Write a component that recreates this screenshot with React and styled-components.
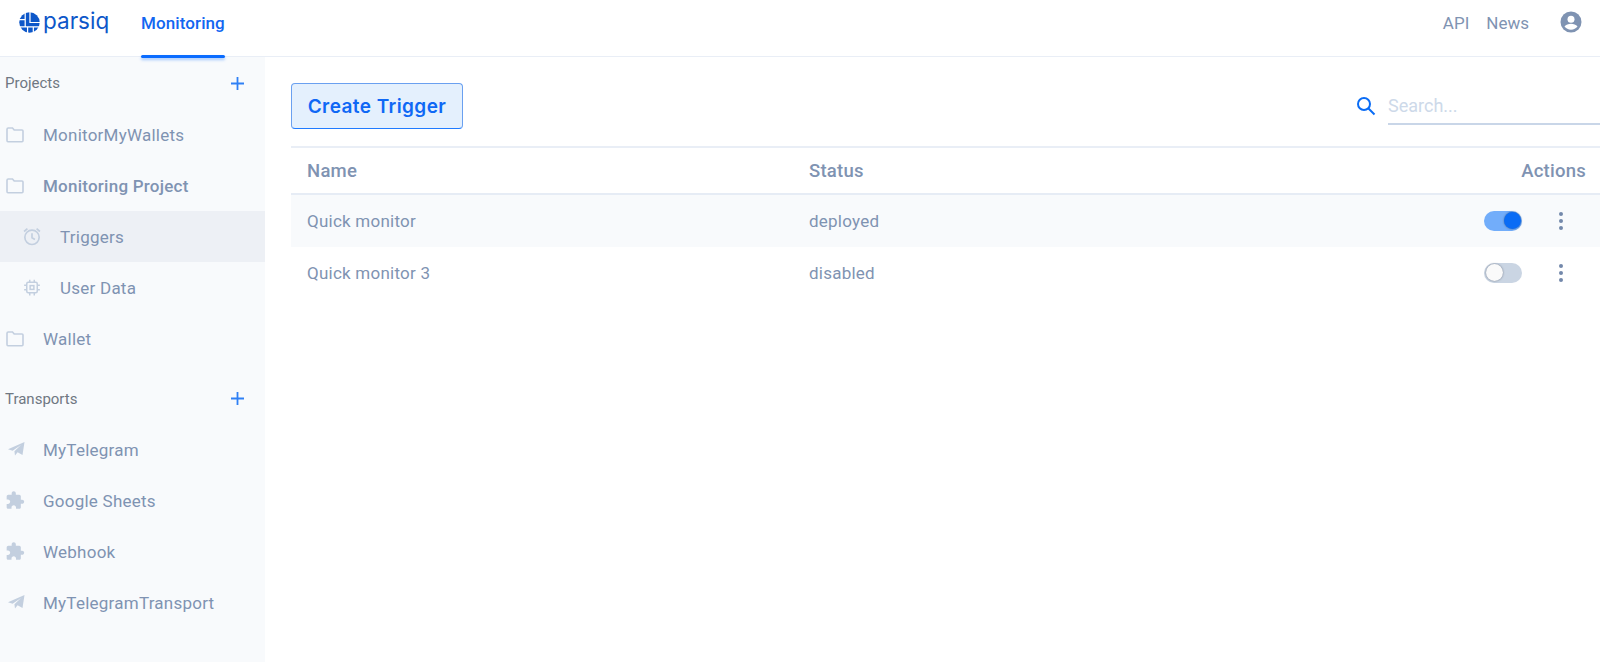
import React from "react";
import styled, { createGlobalStyle } from "styled-components";

const Global = createGlobalStyle`
  html, body { margin: 0; padding: 0; background: #fff; }
  body { font-family: Roboto, "Liberation Sans", sans-serif; color: #7f93b2; overflow: hidden; }
`;
const Page = styled.div`display: flex; flex-direction: column; height: 662px; width: 1600px;`;
const Header = styled.header`
  height: 56px; flex: none; display: flex; align-items: stretch; background: #fff;
  border-bottom: 1px solid #e9eef6; box-sizing: content-box;
`;
const Logo = styled.div`display: flex; align-items: center; gap: 3px; width: 141px; padding: 0 0 1px 19px; box-sizing: border-box; height: 46px;`;
const LogoText = styled.span`font-family: Inter, sans-serif; font-weight: 400; font-size: 22.5px; color: #0d57c9; line-height: 1; position: relative; top: -1px;`;
const NavTab = styled.a`
  position: relative; display: flex; align-items: flex-start; padding-top: 14px; height: 58px; box-sizing: border-box;
  font-size: 17px; font-weight: 500; color: #1266f1; line-height: 18px; letter-spacing: 0.1px;
  &::after { content: ""; position: absolute; left: 0; right: 0; bottom: 0; height: 3px; background: #0a6cff; box-shadow: 0 2px 3px rgba(10,108,255,.35); border-radius: 1.5px; }
`;
const Spacer = styled.div`flex: 1;`;
const TopLinks = styled.nav`display: flex; align-items: flex-start; padding-top: 14px; gap: 17px; margin-right: 31px; font-size: 17px; line-height: 18px; color: #7f93b2;`;
const Avatar = styled.div`width: 22px; height: 22px; margin: 11px 18px 0 0;`;
const Body = styled.div`display: flex; flex: 1; min-height: 0;`;
const Sidebar = styled.aside`width: 265px; flex: none; background: #f8fafc;`;
const SectionHead = styled.div`
  height: ${p => p.$h || 51}px; display: flex; align-items: center; justify-content: space-between; padding: 0 21px 0 5px;
  font-size: 15px; color: #6f7782; margin-top: ${p => p.$mt || 0}px;
`;
const Item = styled.div`
  height: 51px; display: flex; align-items: center; font-size: 17px; letter-spacing: 0.24px;
  padding-left: ${p => (p.$child ? 22 : 5)}px; gap: 18px;
  color: #7f93b2; font-weight: ${p => (p.$bold ? 500 : 400)};
  background: ${p => (p.$active ? "#edf0f5" : "transparent")};
`;
const IconBox = styled.span`width: 20px; height: 20px; display: flex; align-items: center; justify-content: center; flex: none;`;
const Main = styled.main`flex: 1; padding: 26px 0 0 26px; min-width: 0;`;
const Toolbar = styled.div`display: flex; justify-content: space-between; align-items: flex-start; height: 64px;`;
const CreateBtn = styled.button`
  width: 172px; height: 46px; border: 1px solid #6aa0f0; border-bottom-color: #1f7bff; border-radius: 4px; background: #e4f0fd;
  color: #0f68f5; font-family: Inter, sans-serif; font-weight: 600; font-size: 19px; letter-spacing: .42px; padding: 0; box-sizing: border-box;
`;
const SearchWrap = styled.div`display: flex; align-items: flex-start; gap: 12px; padding-top: 12px;`;
const SearchField = styled.div`
  width: 212px; height: 31px; border-bottom: 2px solid #c9d6e8; font-size: 18px; line-height: 28px; color: #cdd9e9; margin-top: -3px;
`;
const Table = styled.div`border-top: 2px solid #e9eef6; margin-top: -1px;`;
const Row = styled.div`
  display: grid; grid-template-columns: 502px 1fr 68px 46px; align-items: center; padding: 0 0 0 16px;
  height: ${p => p.$h}px; background: ${p => (p.$shade ? "#f8fafc" : "transparent")};
  border-bottom: ${p => (p.$head ? "2px solid #e6ecf5" : "none")};
  font-size: ${p => (p.$head ? 18.5 : 17)}px; font-weight: ${p => (p.$head ? 500 : 400)}; color: #7f93b2;
  letter-spacing: ${p => (p.$head ? 0.25 : 0.24)}px;
`;
const ActionsHead = styled.div`grid-column: 3 / 5; text-align: right; padding-right: 14px;`;
const Toggle = styled.div`
  position: relative; width: 38px; height: 20px; border-radius: 10px; margin-left: -2px; background: ${p => (p.$on ? "#72adfa" : "#cad5e3")};
  &::after { content: ""; position: absolute; top: 1px; left: ${p => (p.$on ? 20 : 2)}px; width: 17px; height: 17px; border-radius: 50%;
    background: ${p => (p.$on ? "#0a6cf5" : "#fafafa")}; box-shadow: 0 0 2px rgba(40,50,70,.6); }
`;
const Kebab = styled.div`display: flex; flex-direction: column; gap: 3px; align-items: center; width: 4px; margin-left: 5px;`;
const Dot = styled.i`width: 4px; height: 4px; border-radius: 50%; background: #7388ab; display: block;`;

const c = "#c3cfdf";
const Folder = () => (
  <svg width="18" height="16" viewBox="0 0 18 16" fill="none" stroke={c} strokeWidth="1.6">
    <path d="M1 13.5V2.2C1 1.5 1.5 1 2.2 1H6.5L8.2 3H16C16.6 3 17 3.4 17 4V13.5C17 14.2 16.6 14.8 16 14.8H2C1.4 14.8 1 14.2 1 13.5Z" />
  </svg>
);
const Alarm = () => (
  <svg width="21" height="21" viewBox="0 0 24 24" fill="none" stroke={c} strokeWidth="2">
    <circle cx="12" cy="13" r="8.6" />
    <path d="M12 8v5.5l3.5 2M2.5 6 6.5 2.5M21.5 6l-4-3.5" />
  </svg>
);
const Chip = () => (
  <svg width="18" height="19" viewBox="0 0 24 24" fill="none" stroke={c} strokeWidth="2">
    <rect x="5" y="5" width="14" height="14" rx="2" />
    <rect x="9.5" y="9.5" width="5" height="5" />
    <path d="M9 1.5V5M15 1.5V5M9 19v3.5M15 19v3.5M1.5 9H5M1.5 15H5M19 9h3.5M19 15h3.5" />
  </svg>
);
const Plane = () => (
  <svg width="17" height="15" viewBox="0 0 17 15" fill={c} style={{ marginLeft: 3 }}>
    <path d="M0 7.2 16.5 0 14.5 13 9.6 10.2 7 13.6 6.4 9.3 13 3 4.6 8.8Z" />
  </svg>
);
const Puzzle = () => (
  <svg width="21" height="21" viewBox="0 0 24 24" fill={c}>
    <path d="M20.5 11H19V7c0-1.1-.9-2-2-2h-4V3.5C13 2.12 11.88 1 10.5 1S8 2.12 8 3.5V5H4c-1.1 0-1.99.9-1.99 2v3.8H3.5c1.49 0 2.7 1.21 2.7 2.7s-1.21 2.7-2.7 2.7H2V20c0 1.1.9 2 2 2h3.8v-1.5c0-1.49 1.21-2.7 2.7-2.7 1.49 0 2.7 1.21 2.7 2.7V22H17c1.1 0 2-.9 2-2v-4h1.5c1.38 0 2.5-1.12 2.5-2.5S21.88 11 20.5 11z" />
  </svg>
);
const Plus = () => (
  <svg width="13" height="13" viewBox="0 0 13 13" stroke="#2f80f5" strokeWidth="1.8"><path d="M6.5 0v13M0 6.5h13" /></svg>
);

export default function App() {
  return (
    <Page>
      <Global />
      <Header>
        <Logo>
          <svg width="21" height="21" viewBox="0 0 22 22">
            <circle cx="11" cy="11" r="10.7" fill="#0d57c9" />
            <path d="M6.5 0v15.5M0 8h6.5M11.5 0v11H22M0 15.5h22M9 15.5V22M15 15.5V22" stroke="#fff" strokeWidth="1.3" fill="none" />
          </svg>
          <LogoText>parsiq</LogoText>
        </Logo>
        <NavTab>Monitoring</NavTab>
        <Spacer />
        <TopLinks><span>API</span><span>News</span></TopLinks>
        <Avatar>
          <svg width="22" height="22" viewBox="0 0 22 22">
            <circle cx="11" cy="11" r="10.5" fill="#7f93b2" />
            <circle cx="11" cy="8.3" r="3.5" fill="#fff" />
            <path d="M4.5 15.6c1.4-2 4-2.8 6.5-2.8s5.1.8 6.5 2.8c-1.5 2-3.8 3.2-6.5 3.2s-5-1.2-6.5-3.2Z" fill="#fff" />
          </svg>
        </Avatar>
      </Header>
      <Body>
        <Sidebar>
          <SectionHead $h={52}><span>Projects</span><Plus /></SectionHead>
          <Item><IconBox><Folder /></IconBox>MonitorMyWallets</Item>
          <Item $bold><IconBox><Folder /></IconBox>Monitoring Project</Item>
          <Item $child $active><IconBox><Alarm /></IconBox>Triggers</Item>
          <Item $child><IconBox><Chip /></IconBox>User Data</Item>
          <Item><IconBox><Folder /></IconBox>Wallet</Item>
          <SectionHead $mt={9}><span>Transports</span><Plus /></SectionHead>
          <Item><IconBox><Plane /></IconBox>MyTelegram</Item>
          <Item><IconBox><Puzzle /></IconBox>Google Sheets</Item>
          <Item><IconBox><Puzzle /></IconBox>Webhook</Item>
          <Item><IconBox><Plane /></IconBox>MyTelegramTransport</Item>
        </Sidebar>
        <Main>
          <Toolbar>
            <CreateBtn>Create Trigger</CreateBtn>
            <SearchWrap>
              <svg width="20" height="20" viewBox="0 0 20 20" fill="none" stroke="#0a6cf5" strokeWidth="2" style={{ marginTop: 1 }}>
                <circle cx="8" cy="8" r="6" /><path d="m12.5 12.5 6 6" />
              </svg>
              <SearchField>Search...</SearchField>
            </SearchWrap>
          </Toolbar>
          <Table>
            <Row $head $h={45}><span>Name</span><span>Status</span><ActionsHead>Actions</ActionsHead></Row>
            <Row $shade $h={52}><span>Quick monitor</span><span>deployed</span><Toggle $on /><Kebab><Dot /><Dot /><Dot /></Kebab></Row>
            <Row $h={51}><span>Quick monitor 3</span><span>disabled</span><Toggle /><Kebab><Dot /><Dot /><Dot /></Kebab></Row>
          </Table>
        </Main>
      </Body>
    </Page>
  );
}
